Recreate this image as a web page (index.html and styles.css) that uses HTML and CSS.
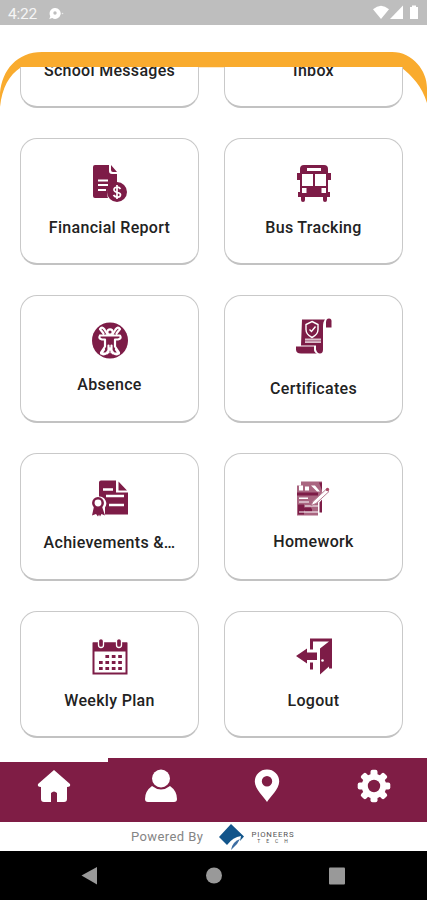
FILE: index.html
```html
<!DOCTYPE html>
<html lang="en">
<head>
<meta charset="utf-8">
<title>School menu</title>
<link rel="stylesheet" href="styles.css">
</head>
<body>
<div class="phone">
  <header class="status">
    <span class="time">4:22</span>
    <svg class="notice" width="16" height="14" viewBox="0 0 16 14"><path d="M6.8 1a5.500 5.500 0 1 1-2.600 10.100L1.300 12l1-2.800A5.500 5.500 0 0 1 6.800 1z" fill="#fff"/><circle cx="7" cy="6" r="1.700" fill="#bebebe"/><circle cx="14.500" cy="6.500" r=".8" fill="#e8e8e8"/></svg>
    <svg class="signals" width="48" height="16" viewBox="0 0 48 16" fill="#fff"><path d="M0 4.200Q8-2.800 16 4.200L8 14z"/><path d="M30 .5V14H17z"/><path d="M37 2h2V.5h4V2h2v12h-8z"/></svg>
  </header>
  <main class="content">
    <svg class="arch" width="427" height="60" viewBox="0 0 427 60"><path d="M0 55V41C2 18 17 0 42 0H392C413 0 427 19 427 36V51C422 34 412 24 401 15.300H21C9 23 2 36 0 55z" fill="#f9ab2e"/></svg>
    <div class="scroll">
      <div class="grid">
        <section class="card cut"><h2>School Messages</h2></section>
        <section class="card cut"><h2>Inbox</h2></section>
        <section class="card">
          <svg class="icon" viewBox="0 0 36 37"><path d="M3 0H17V6q0 3 3 3h5v9a11 11 0 0 0-9 15H3q-2 0-2-2V2q0-2 2-2zM19 0l6 7h-4q-2 0-2-2z" fill="#7d1c47"/><path d="M6 15.500H16M6 20H16M6 25H14" stroke="#fff" stroke-width="1.800"/><circle cx="25" cy="27" r="10" fill="#7d1c47"/><path d="M28.500 24C27 21.500 21.500 21.500 22 25S29 26.500 28.500 30 22.500 32 21.500 30M25 20V34" fill="none" stroke="#fff" stroke-width="1.700"/></svg>
          <h2>Financial Report</h2>
        </section>
        <section class="card">
          <svg class="icon" viewBox="0 0 36 37"><path d="M8 0H28Q32 0 32 4V8H35V15H32V27H34V32H31V35Q31 37 29 37T27 35V32H9V35Q9 37 7 37T5 35V32H2V27H4V15H1V8H4V4Q4 0 8 0z" fill="#7d1c47"/><path d="M11 3H25V6H11zM6 9H17V21H6zM19 9H30V21H19zM6 23H10.500V28H6zM25.500 23H30V28H25.500z" fill="#fff"/></svg>
          <h2>Bus Tracking</h2>
        </section>
        <section class="card">
          <svg class="icon" viewBox="0 0 36 36"><circle cx="18" cy="18" r="18" fill="#7d1c47"/><g fill="none" stroke="#fff" stroke-width="2.200" stroke-linecap="round" stroke-linejoin="round"><circle cx="18" cy="9.500" r="2.700"/><path d="M11.500 11L8 6.500Q10 3.500 12.500 7L15 11M24.500 11L28 6.500Q26 3.500 23.500 7L21 11M8 13H28Q30 16 26 17H23V24L27 30Q25 34 21 30L18 26 15 30Q11 34 9 30L13 24V17H10Q6 16 8 13M16.500 23V30M19.500 23V30M12 27L9 31H15M24 27L27 31H21"/></g></svg>
          <h2>Absence</h2>
        </section>
        <section class="card certificate">
          <svg class="icon" viewBox="0 0 36 36"><path d="M6 1H29Q27 3 27 8V31Q27 35 24 35T20 31V27H5zM30 9V4Q30 0 33 0T35.500 4V9zM0 28H18V31Q18 34 21 35H5Q0 35 0 31z" fill="#7d1c47"/><path d="M9 20H25V24.500H9z" fill="#dcbfcc"/><path d="M9 22.300H25" stroke="#8f3b60" stroke-width=".7"/><g fill="none" stroke="#fff" stroke-width="1.400"><path d="M16 3L22 6V11Q22 16 16 19 10 16 10 11V6z"/><path d="M13.500 11L15.500 13 19.500 8"/></g></svg>
          <h2>Certificates</h2>
        </section>
        <section class="card">
          <svg class="icon" viewBox="0 0 36 36"><path d="M9 0H24V12H36V34H13V27A7 7 0 0 0 7 16V2q0-2 2-2zM26.500 1L35 10H26.500z" fill="#7d1c47"/><path d="M11 9H21M14 15.500H32M17 24.500H32" stroke="#fff" stroke-width="2.400"/><path d="M2 26L0 35 4 33.500 6 36 7 34 8 36 9.500 33.500 13 35 10 26z" fill="#7d1c47"/><circle cx="6" cy="22.500" r="4.700" fill="#fff" stroke="#7d1c47" stroke-width="2.500"/></svg>
          <h2>Achievements &amp;…</h2>
        </section>
        <section class="card homework">
          <svg class="icon" viewBox="0 0 36 36"><path d="M5 1H26V12L22 17V35H1V5H5z" fill="#a96580"/><path d="M1 12H22V15H1zM2 24H8V27H15V30H8V34H2zM23 2H26V10zM23.500 22L26 19V32H23.500zM9 28H16V31H9z" fill="#7d1c47"/><path d="M3 5H7V10H3zM9 9V6H13V10H9zM15 5H19L24 11H21zM3 17H12V18.500H3zM3 21H13V22H3zM9 25H22V26H9zM3 31H22V32H3z" fill="#fff"/><path d="M17 21L30 9 33 11 20 23 15 25z" fill="#fff" stroke="#b67c93"/><circle cx="31.500" cy="9" r="1.700" fill="#a84865"/></svg>
          <h2>Homework</h2>
        </section>
        <section class="card">
          <svg class="icon" viewBox="0 0 36 36"><path d="M1.500 5H34.500V35H1.500z" fill="#fff" stroke="#7d1c47" stroke-width="2"/><path d="M1 4H35V13H1z" fill="#7d1c47"/><rect x="6.500" y="0" width="5" height="9" rx="2.500" fill="#7d1c47" stroke="#fff" stroke-width="1.300"/><rect x="24.500" y="0" width="5" height="9" rx="2.500" fill="#7d1c47" stroke="#fff" stroke-width="1.300"/><path d="M13.400 18H30M7 24H30M7 30H30" stroke="#7d1c47" stroke-width="3" stroke-dasharray="3.700 2.700"/></svg>
          <h2>Weekly Plan</h2>
        </section>
        <section class="card">
          <svg class="icon" viewBox="0 0 36 36"><path d="M14 11V0H36V30H33V28L24 36V10L33 3H17V11zM14 24H17V31H14zM0 17.500L11 10V14H21V21.500H11V25z" fill="#7d1c47"/><circle cx="26.500" cy="22" r="1.300" fill="#fff"/></svg>
          <h2>Logout</h2>
        </section>
      </div>
    </div>
  </main>
  <nav class="tabs">
    <a class="active"><svg width="34" height="34" viewBox="0 0 34 34"><path d="M17 1L33 15Q34 18 30 18V30Q30 33 27 33H20V24Q17 21 14 24V33H7Q4 33 4 30V18Q0 18 1 15z" fill="#fff"/></svg></a>
    <a><svg width="34" height="34" viewBox="0 0 34 34" fill="#fff"><circle cx="17" cy="9.500" r="9"/><path d="M8 17Q17 24 26 17 33 22 33 30 33 33 30 33H4Q1 33 1 30 1 22 8 17z"/></svg></a>
    <a><svg width="34" height="34" viewBox="0 0 34 34"><path fill-rule="evenodd" d="M17 .5A12 12 0 0 1 29.200 12.500C29.200 20 20 28 17 33 14 28 4.800 20 4.800 12.500A12 12 0 0 1 17 .5zM17 7a5.200 5.200 0 1 0 0 10.400A5.200 5.200 0 0 0 17 7z" fill="#fff"/></svg></a>
    <a><svg width="34" height="34" viewBox="-17 -17 34 34"><g fill="#fff"><circle r="12.300"/><g id="teeth"><rect x="-3.500" y="-16.300" width="7" height="32.600" rx="2"/><rect x="-16.300" y="-3.500" width="32.600" height="7" rx="2"/></g><use href="#teeth" transform="rotate(45)"/></g><circle r="6.200" fill="#7f1d45"/></svg></a>
  </nav>
  <footer class="powered">
    <span class="by">Powered By</span>
    <svg class="mark" width="26" height="26" viewBox="0 0 26 26"><path d="M13 0L26 12.500 22 17 23 12Q15 13 9 21L1 13z" fill="#12558b"/><path d="M13 26Q14 18 22 15L19 20z" fill="#3d6ea3"/></svg>
    <span class="brand"><b>PIONEERS</b><i>TECH</i></span>
  </footer>
  <div class="system">
    <svg width="427" height="49" viewBox="0 0 427 49" fill="#999"><path d="M81.500 24.500L97 16V33.500z"/><circle cx="214" cy="24.500" r="8"/><rect x="329" y="16.500" width="16" height="17" rx="1"/></svg>
  </div>
</div>
</body>
</html>
```
FILE: styles.css
```css
* { box-sizing: border-box; }
body { margin: 0; background: #fff; font-family: Roboto, "Liberation Sans", sans-serif; }
.phone { width: 427px; height: 900px; display: flex; flex-direction: column; overflow: hidden; }
.status { height: 25px; flex: none; background: #bebebe; display: flex; align-items: center; padding: 2px 7px 0 8px; color: #f5f5f5; }
.time { font-size: 15.500px; width: 40px; letter-spacing: -0.2px; }
.notice { display: block; }
.signals { margin: -2px -1px 0 auto; display: block; }
.content { height: 733px; flex: none; position: relative; padding: 42px 24px 0 20px; }
.arch { position: absolute; left: 0; top: 27px; }
.scroll { height: 691px; overflow: hidden; position: relative; }
.grid { display: grid; grid-template-columns: 179px 179px; grid-auto-rows: 127.700px; gap: 30px 25px; margin-top: -87px; }
.card { border: 1px solid #c9c9c9; border-bottom: 2px solid #c2c2c2; border-radius: 17px; background: #fff; display: flex; flex-direction: column; align-items: center; padding-top: 26px; }
.cut { padding-top: 79px; }
.icon { width: 36px; height: 37px; display: block; }
h2 { margin: 15px 0 0; font-size: 16px; line-height: 22px; font-weight: 500; color: #222; letter-spacing: .3px; white-space: nowrap; }
.certificate { padding-top: 22px; }
.certificate h2 { margin-top: 23px; }
.homework h2 { margin-top: 14px; }
.cut h2 { margin: 0; }
.tabs { height: 64px; flex: none; background: #7f1d45; display: grid; grid-template-columns: 107.500px 106px 107px 106.500px; }
.tabs a { border-top: 1px solid #7f1d45; padding-top: 10px; display: flex; justify-content: center; }
.tabs .active { border-top: 4px solid #fff; padding-top: 7px; }
.powered { height: 29px; flex: none; display: flex; align-items: center; padding-left: 131px; }
.by { width: 87px; font-size: 13px; letter-spacing: .4px; color: #858585; white-space: nowrap; }
.brand { display: flex; flex-direction: column; align-items: center; width: 46px; margin: 2px 0 0 6px; color: #555; line-height: 6px; }
.brand b { font-size: 6.500px; font-weight: 400; transform: scaleX(1.200); letter-spacing: .7px; }
.brand i { font-size: 5px; font-style: normal; letter-spacing: 6px; margin-left: 5px; }
.system { height: 49px; flex: none; background: #000; }
.system svg { display: block; }
```
